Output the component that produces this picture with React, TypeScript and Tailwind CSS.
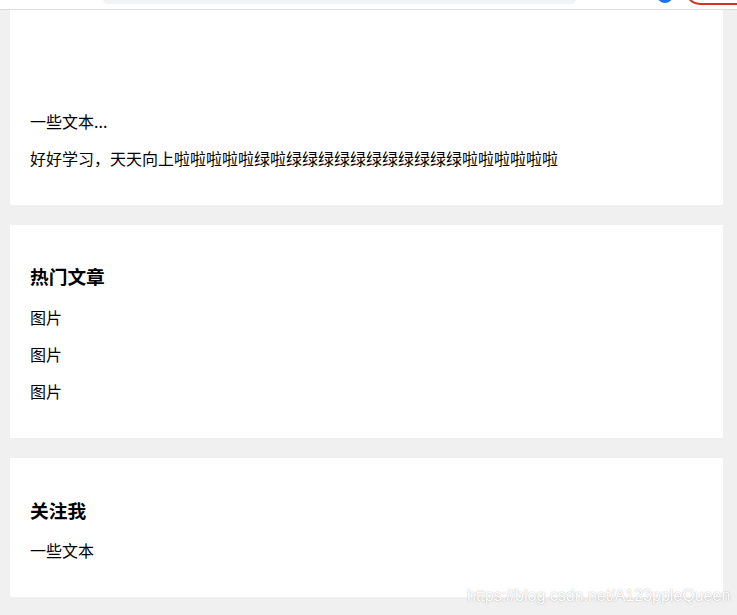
import React from "react";

const cjk = { fontFamily: '"Microsoft YaHei", "Noto Sans CJK SC", sans-serif' };

function Card({ children, className = "" }: { children: React.ReactNode; className?: string }) {
  return <div className={`bg-white ml-[10px] w-[713px] px-5 pb-5 ${className}`}>{children}</div>;
}

function H3({ children }: { children: React.ReactNode }) {
  return <h3 className="text-[18.72px] leading-[25px] font-bold my-[18.72px] text-black">{children}</h3>;
}

function P({ children }: { children: React.ReactNode }) {
  return <p className="text-[16px] leading-[21px] my-4 text-black">{children}</p>;
}

export default function App() {
  return (
    <div className="relative min-h-[615px] bg-[#f0f0f0] overflow-hidden" style={cjk}>
      <div className="h-[10px] bg-white border-b border-[#dadce0] flex items-start overflow-hidden">
        <div className="shrink-0 ml-[103px] w-[473px] h-[5px] -mt-[1px] rounded-b-[12px] bg-[#f1f3f4]" />
        <div className="shrink-0 ml-[81px] w-[16px] h-[16px] -mt-[13px] rounded-full bg-[#1a73e8]" />
        <div className="shrink-0 ml-[12px] w-[90px] h-[30px] -mt-[25px] rounded-full border-2 border-[#d93025] bg-white" />
      </div>

      <Card className="pt-[84.5px]">
        <P>一些文本...</P>
        <P>好好学习，天天向上啦啦啦啦啦绿啦绿绿绿绿绿绿绿绿绿绿绿啦啦啦啦啦啦</P>
      </Card>

      <Card className="mt-5 pt-5">
        <H3>热门文章</H3>
        <P>图片</P>
        <P>图片</P>
        <P>图片</P>
      </Card>

      <Card className="mt-5 pt-5">
        <H3>关注我</H3>
        <P>一些文本</P>
      </Card>

      <div
        className="absolute left-[467px] top-[586px] text-[16px] leading-[20px] text-white [text-shadow:0_0_1.5px_rgba(0,0,0,0.35)] whitespace-nowrap"
        style={{ fontFamily: '"Liberation Sans", Arial, sans-serif' }}
      >
        https://blog.csdn.net/A123ppleQueen
      </div>
    </div>
  );
}
